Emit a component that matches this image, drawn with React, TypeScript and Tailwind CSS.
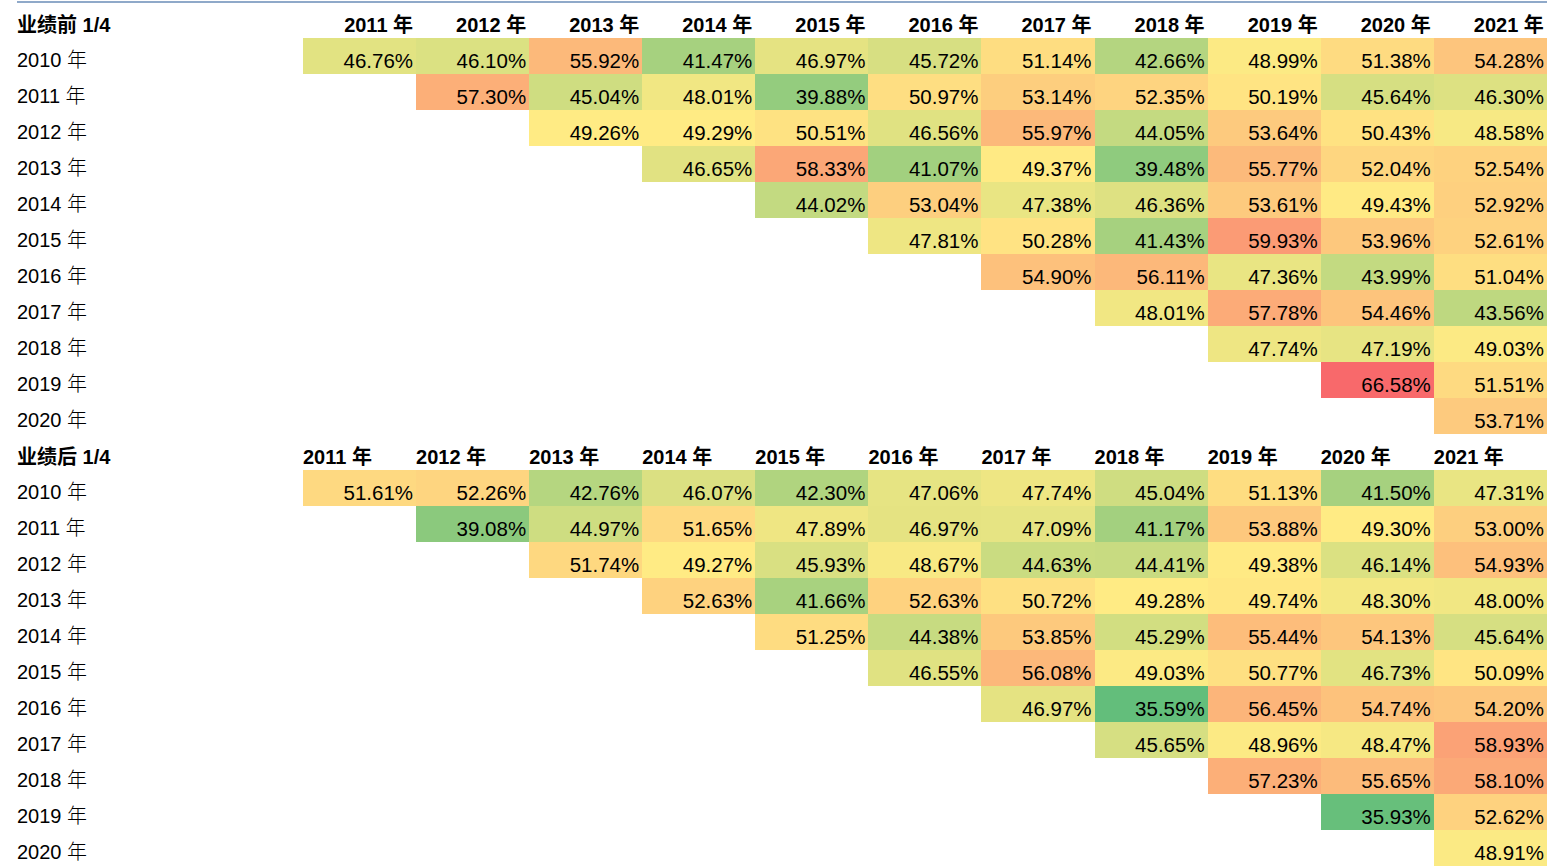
import React from "react";

const block1: number[][] = [
  [46.76, 46.1, 55.92, 41.47, 46.97, 45.72, 51.14, 42.66, 48.99, 51.38, 54.28],
  [57.3, 45.04, 48.01, 39.88, 50.97, 53.14, 52.35, 50.19, 45.64, 46.3],
  [49.26, 49.29, 50.51, 46.56, 55.97, 44.05, 53.64, 50.43, 48.58],
  [46.65, 58.33, 41.07, 49.37, 39.48, 55.77, 52.04, 52.54],
  [44.02, 53.04, 47.38, 46.36, 53.61, 49.43, 52.92],
  [47.81, 50.28, 41.43, 59.93, 53.96, 52.61],
  [54.9, 56.11, 47.36, 43.99, 51.04],
  [48.01, 57.78, 54.46, 43.56],
  [47.74, 47.19, 49.03],
  [66.58, 51.51],
  [53.71],
];

const block2: number[][] = [
  [51.61, 52.26, 42.76, 46.07, 42.3, 47.06, 47.74, 45.04, 51.13, 41.5, 47.31],
  [39.08, 44.97, 51.65, 47.89, 46.97, 47.09, 41.17, 53.88, 49.3, 53.0],
  [51.74, 49.27, 45.93, 48.67, 44.63, 44.41, 49.38, 46.14, 54.93],
  [52.63, 41.66, 52.63, 50.72, 49.28, 49.74, 48.3, 48.0],
  [51.25, 44.38, 53.85, 45.29, 55.44, 54.13, 45.64],
  [46.55, 56.08, 49.03, 50.77, 46.73, 50.09],
  [46.97, 35.59, 56.45, 54.74, 54.2],
  [45.65, 48.96, 48.47, 58.93],
  [57.23, 55.65, 58.1],
  [35.93, 52.62],
  [48.91],
];

const all = [...block1.flat(), ...block2.flat()].sort((a, b) => a - b);
const minV = all[0];
const maxV = all[all.length - 1];
const mid = (() => {
  const n = all.length;
  const pos = (n - 1) * 0.5;
  const lo = Math.floor(pos);
  const hi = Math.ceil(pos);
  return all[lo] + (all[hi] - all[lo]) * (pos - lo);
})();

const GREEN = [99, 190, 123];
const YELLOW = [255, 235, 132];
const RED = [248, 105, 107];

function lerp(a: number[], b: number[], t: number) {
  return a.map((x, i) => Math.round(x + (b[i] - x) * t));
}

function colorFor(v: number) {
  let c: number[];
  if (v <= mid) c = lerp(GREEN, YELLOW, (v - minV) / (mid - minV));
  else c = lerp(YELLOW, RED, (v - mid) / (maxV - mid));
  return `rgb(${c[0]},${c[1]},${c[2]})`;
}

const years = [2011, 2012, 2013, 2014, 2015, 2016, 2017, 2018, 2019, 2020, 2021];
const rowYears = [2010, 2011, 2012, 2013, 2014, 2015, 2016, 2017, 2018, 2019, 2020];

function Block({ title, data, alignLeft, headerH }: { title: string; data: number[][]; alignLeft: boolean; headerH: string }) {
  return (
    <div className="grid grid-cols-[303px_repeat(11,113.09px)]">
      <div className={`${headerH} flex items-end pl-[17px] pb-[1px] leading-[23px] font-bold`}>{title}</div>
      {years.map((y) => (
        <div
          key={y}
          className={`${headerH} flex items-end pb-[1px] leading-[23px] font-bold whitespace-nowrap ${alignLeft ? "justify-start" : "justify-end pr-[3px]"}`}
        >
          {y} 年
        </div>
      ))}
      {data.map((row, i) => (
        <React.Fragment key={i}>
          <div className="h-[36px] flex items-end pl-[17px] pb-[2px] leading-[23px] whitespace-pre">
            {rowYears[i]} <span className="font-light">年</span>
          </div>
          {years.map((_, j) => {
            const k = j - i;
            if (k < 0) return <div key={j} className="h-[36px]" />;
            const v = row[k];
            return (
              <div
                key={j}
                className="h-[36px] flex items-end justify-end pr-[3px] pb-[2px] leading-[23px] text-[20.5px]"
                style={{ backgroundColor: colorFor(v) }}
              >
                {v.toFixed(2)}%
              </div>
            );
          })}
        </React.Fragment>
      ))}
    </div>
  );
}

export default function App() {
  return (
    <div className="w-[1554px] h-[867px] overflow-hidden bg-white text-black text-[20px] font-['Liberation_Sans','Noto_Sans_CJK_SC',sans-serif]">
      <div className="mt-[1px] ml-[17px] w-[1530px] h-[2px] bg-[#8fa9c9]" />
      <Block title="业绩前 1/4" data={block1} alignLeft={false} headerH="h-[35px]" />
      <Block title="业绩后 1/4" data={block2} alignLeft={true} headerH="h-[36px]" />
    </div>
  );
}
